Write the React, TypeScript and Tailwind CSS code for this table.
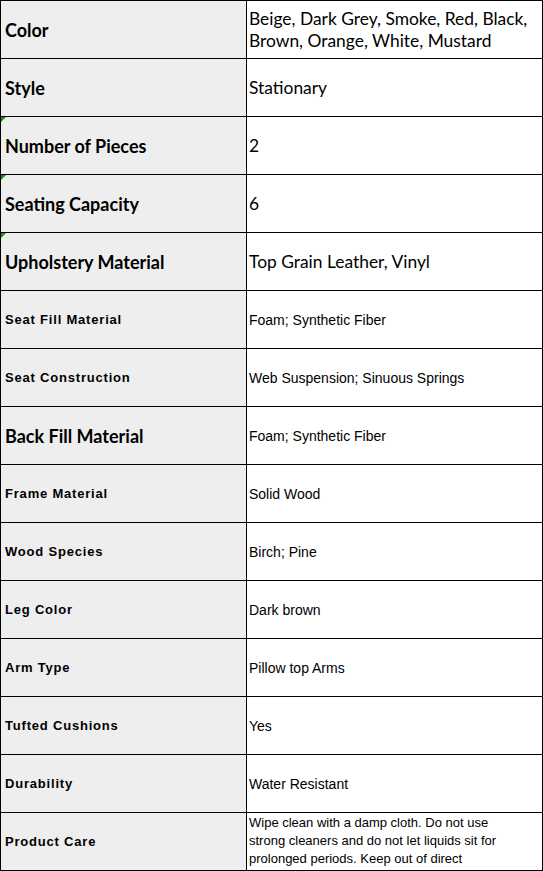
import React from "react";

type Row = {
  label: string;
  value: string;
  big?: boolean; // calibri-like label
  bigValue?: boolean;
  mark?: boolean;
};

const rows: Row[] = [
  { label: "Color", value: "Beige, Dark Grey, Smoke, Red, Black, Brown, Orange, White, Mustard", big: true, bigValue: true },
  { label: "Style", value: "Stationary", big: true, bigValue: true },
  { label: "Number of Pieces", value: "2", big: true, bigValue: true, mark: true },
  { label: "Seating Capacity", value: "6", big: true, bigValue: true, mark: true },
  { label: "Upholstery Material", value: "Top Grain Leather, Vinyl", big: true, bigValue: true, mark: true },
  { label: "Seat Fill Material", value: "Foam; Synthetic Fiber" },
  { label: "Seat Construction", value: "Web Suspension; Sinuous Springs" },
  { label: "Back Fill Material", value: "Foam; Synthetic Fiber", big: true },
  { label: "Frame Material", value: "Solid Wood" },
  { label: "Wood Species", value: "Birch; Pine" },
  { label: "Leg Color", value: "Dark brown" },
  { label: "Arm Type", value: "Pillow top Arms" },
  { label: "Tufted Cushions", value: "Yes" },
  { label: "Durability", value: "Water Resistant" },
];

const calibri = "font-['Lato','Noto_Sans',sans-serif] text-[17.4px] leading-[22px]";
const calibriBold = "font-['Lato','Noto_Sans',sans-serif] text-[18px] leading-[22px] font-bold";
const arial = "font-['Liberation_Sans',Arial,sans-serif] text-[14px] leading-[18px]";
const arialBold = "font-['Liberation_Sans',Arial,sans-serif] text-[13px] leading-[18px] font-bold tracking-[0.8px]";

export default function App() {
  return (
    <div className="w-[543px] bg-white text-black border-l border-t border-black">
      {rows.map((r) => (
        <div key={r.label} className="flex h-[58px] border-b border-black">
          <div className="relative flex w-[246px] shrink-0 items-center border-r border-black bg-[#eeeeee] pl-[4px]">
            {r.mark && (
              <span className="absolute left-0 top-0 h-0 w-0 border-t-[5px] border-r-[5px] border-t-[#1f8a1f] border-r-transparent" />
            )}
            <span className={r.big ? calibriBold : arialBold}>{r.label}</span>
          </div>
          <div className="flex w-[296px] shrink-0 items-center border-r border-black pl-[2px] pr-[4px]">
            <span className={r.bigValue ? calibri : arial}>{r.value}</span>
          </div>
        </div>
      ))}
      <div className="flex h-[58px] border-b border-black">
        <div className="flex w-[246px] shrink-0 items-center border-r border-black bg-[#eeeeee] pl-[4px]">
          <span className={arialBold}>Product Care</span>
        </div>
        <div className="w-[296px] shrink-0 border-r border-black pl-[2px] pt-[1px]">
          <span className="block w-[262px] font-['Liberation_Sans',Arial,sans-serif] text-[13px] leading-[18px]">
            Wipe clean with a damp cloth. Do not use strong cleaners and do not let liquids sit for prolonged periods. Keep out of direct
          </span>
        </div>
      </div>
    </div>
  );
}
